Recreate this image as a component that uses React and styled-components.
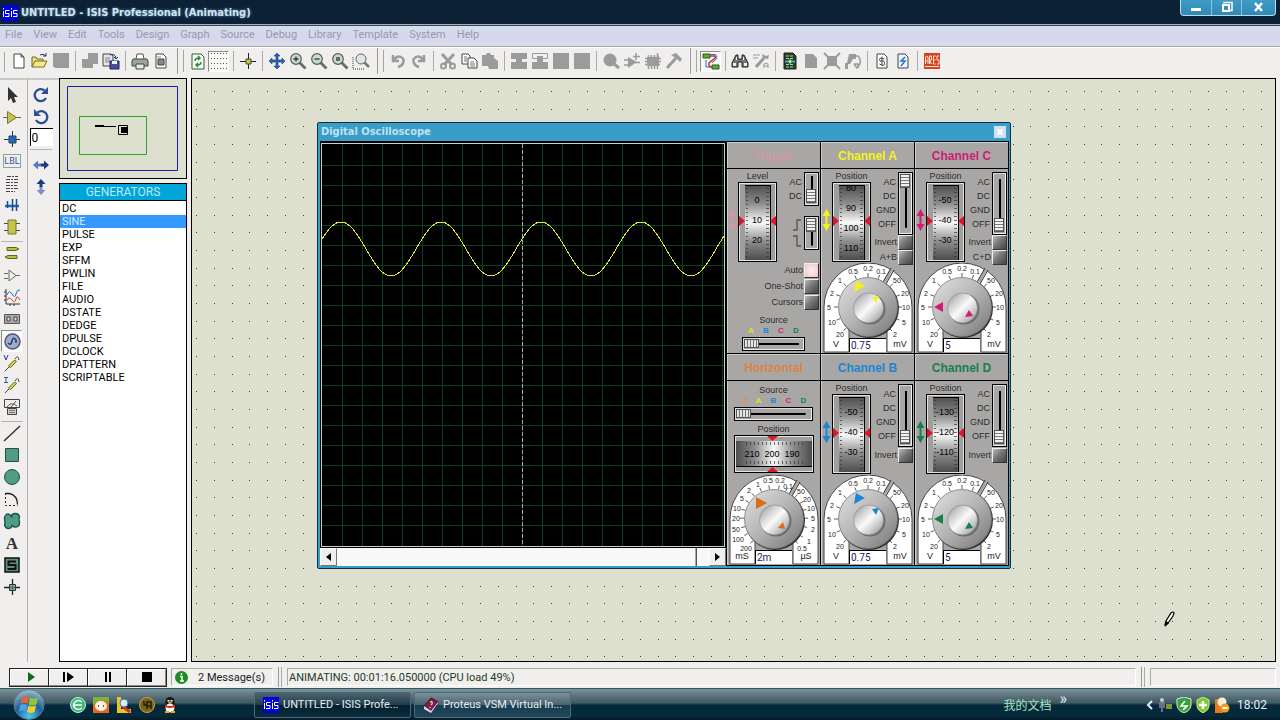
import React from "react";
import styled, { createGlobalStyle } from "styled-components";

const colors = {
    face: "#f0efee",
    canvas: "#dde0cf",
    panel: "#a9a7a6",
    off: "#9b9b9b",
    navy: "#1c3a86",
    teal: "#4f9c87",
    olive: "#c3c44a"
};
const ui = `Roboto, "Liberation Sans", sans-serif`;
const arial = `"Liberation Sans", Arial, sans-serif`;

const GlobalStyle = createGlobalStyle`
    * { box-sizing: border-box; }
    body { margin: 0; background: ${colors.face}; font-family: ${ui}; font-size: 11px; }
    button, input { font: inherit; color: inherit; margin: 0; padding: 0; }
    svg { display: block; flex: none; }
    ul { list-style: none; margin: 0; padding: 0; }
`;

const Page = styled.div`
    min-height: 100vh;
    display: flex;
    flex-direction: column;
`;

/* ---------- title bar and menu ---------- */

const TitleBar = styled.header`
    display: flex;
    align-items: center;
    height: 26px;
    padding-left: 2px;
    background: #0c2036;
    border-bottom: 1px solid #33475a;
    box-shadow: inset 0 -1px #9fb0ba;
`;
const TitleText = styled.h1`
    flex: 1;
    margin: 0 0 0 3px;
    font: bold 11px/24px "DejaVu Sans Condensed", "DejaVu Sans", sans-serif;
    color: #cfe4f2;
    text-shadow: 0 0 3px #6d93b0;
`;
const WindowButtons = styled.div`
    display: flex;
    align-self: flex-start;
    margin-right: 4px;
    border: 1px solid #b9dcea;
    border-top: 0;
    border-radius: 0 0 4px 4px;
    background: linear-gradient(#3f9cc6, #3089b5);
    overflow: hidden;
`;
const WindowButton = styled.button`
    display: flex;
    justify-content: center;
    width: ${p => (p.$wide ? 34 : 30)}px;
    height: 15px;
    border: 0;
    border-left: ${p => (p.$first ? "0" : "1px solid #8cc4dc")};
    background: none;
`;
const MenuBar = styled.nav`
    display: flex;
    gap: 11px;
    height: 21px;
    padding-left: 5px;
    border-bottom: 1px solid #a3a6ad;
    background: linear-gradient(#d3e0ea, #d7d6ea 50%, #dadaec);
`;
const MenuLink = styled.a`
    font-size: 11px;
    line-height: 18px;
    color: #969bab;
    text-decoration: none;
`;

/* ---------- toolbars ---------- */

const ToolBar = styled.div`
    display: flex;
    align-items: center;
    height: 31px;
    padding: 0 0 4px 8px;
    border-top: 1px solid #fff;
    background: linear-gradient(#a5a5a5, #a5a5a5) 4px 4px / 1px 20px no-repeat;
`;
const ToolButton = styled.button`
    display: flex;
    align-items: center;
    justify-content: center;
    width: 21px;
    height: ${p => (p.$tall ? 22 : 21)}px;
    border: 1px solid transparent;
    border-color: ${p => (p.$pressed ? "#8d8d8d #fff #fff #8d8d8d" : "transparent")};
    background: ${p => (p.$pressed ? "#f8f8f7" : "none")};
`;
const Separator = styled.span`
    width: 8px;
    height: 20px;
    background: linear-gradient(#aaa, #aaa) 4px 0 / 1px 100% no-repeat;
`;
const GroupEnd = styled.span`
    width: 16px;
    height: 26px;
    background:
        linear-gradient(#9a9a9a, #9a9a9a) 6px 0 / 1px 100% no-repeat,
        linear-gradient(#a5a5a5, #a5a5a5) 12px 2px / 1px 22px no-repeat;
`;
const Main = styled.main`
    flex: 1;
    display: flex;
    padding-right: 4px;
`;
const ModeColumn = styled.div`
    display: flex;
    flex-direction: column;
    align-items: center;
    width: 28px;
    padding: 6px 4px 0 0;
    border-right: 1px solid #b4b4b4;
    box-shadow: inset 0 2px #c9c9c9;
`;
const ModeRule = styled.span`
    width: 22px;
    height: 4px;
    border-bottom: 1px solid #b5b5b5;
    margin-bottom: ${p => (p.$after || 0)}px;
`;
const TurnColumn = styled(ModeColumn)`
    width: 31px;
    padding-right: 5px;
    border: 0;
`;
const AngleInput = styled.input`
    width: 23px;
    height: 18px;
    padding-left: 1px;
    border: 0;
    border-left: 1px solid #000;
    border-top: 1px solid #000;
    border-radius: 0;
    background: #fff;
    font-size: 12px;
`;

/* ---------- side panels ---------- */

const SideColumn = styled.aside`
    display: flex;
    flex-direction: column;
    gap: 4px;
    width: 128px;
`;
const Overview = styled.div`
    height: 101px;
    border: 1px solid #000;
    background: ${colors.canvas};
`;
const PartList = styled.section`
    flex: 1;
    border: 1px solid #000;
    background: #fff;
`;
const ListTitle = styled.h2`
    margin: 0 0 1px;
    border-bottom: 1px solid #000;
    background: #00a6d8;
    color: #bfe8f4;
    font-size: 12px;
    font-weight: 400;
    line-height: 16px;
    text-align: center;
`;
const ListItem = styled.li`
    padding-left: 2px;
    line-height: 13px;
    color: ${p => (p.$selected ? "#d8ecff" : "#000")};
    background: ${p => (p.$selected ? "#3399ff" : "none")};
`;
const Canvas = styled.section`
    position: relative;
    flex: 1;
    margin-left: 4px;
    border: 1px solid #000;
    background: ${colors.canvas};
    overflow: hidden;
`;
const CanvasDots = styled.svg`
    position: absolute;
    inset: 0;
    width: 100%;
    height: 100%;
`;
const PencilCursor = styled.svg`
    position: absolute;
    left: 972px;
    top: 532px;
`;

/* ---------- oscilloscope window ---------- */

const ScopeWindow = styled.div`
    position: absolute;
    left: 125px;
    top: 43px;
    border: 1px solid #12303f;
    padding: 0 1px 2px 2px;
    border-radius: 2px;
    background: #3a9cc8;
    font-family: ${arial};
`;
const ScopeTitle = styled.div`
    display: flex;
    align-items: center;
    justify-content: space-between;
    height: 18px;
    padding: 0 3px 0 1px;
    font: bold 11px/18px "DejaVu Sans Condensed", "DejaVu Sans", sans-serif;
    color: #bfe2f2;
`;
const ScopeClose = styled.button`
    display: flex;
    width: 12px;
    height: 12px;
    border: 0;
    background: #cfe3ee;
`;
const ScopeBody = styled.div`
    display: grid;
    grid-template-columns: auto repeat(3, 94px);
    grid-template-rows: 212px 212px;
    border-top: 1px solid #000;
    background: #000;
`;
const Scope = styled.div`
    grid-row: span 2;
    border-right: 1px solid #000;
`;
const ScreenFrame = styled.div`
    border: 1px solid #000;
    outline: 1px solid #c6d2cc;
    outline-offset: -2px;
    padding: 1px;
    background: #000;
`;
const ScrollBar = styled.div`
    display: flex;
    height: 18px;
    background: #f8f8f8;
`;
const ScrollButton = styled.button`
    display: flex;
    align-items: center;
    justify-content: center;
    width: 17px;
    border: 1px solid;
    border-color: #fff #777 #777 #fff;
    background: #efefef;
`;
const ScrollThumb = styled.div`
    flex: 1;
    margin-right: 12px;
    border-right: 1px solid #555;
    box-shadow: inset -1px 0 #aaa;
    background: #f8f8f7;
`;
const Panel = styled.section`
    display: flex;
    flex-direction: column;
    border-right: 1px solid #000;
    border-bottom: 1px solid #000;
    background: ${colors.panel};
    box-shadow: inset 1px 1px #cfcfcf;
    font-size: 9px;
    line-height: 11px;
    color: #2c2c2c;
`;
const PanelTitle = styled.h3`
    margin: 0;
    height: 27px;
    border-bottom: 1px solid #000;
    font-size: 12px;
    line-height: 29px;
    text-align: center;
    color: ${p => p.$color};
`;
const Upper = styled.div`
    display: flex;
    height: ${p => (p.$short ? 93 : 94)}px;
    padding: 2px 1px 0 0;
`;
const ArrowSlot = styled.div`
    width: 11px;
    padding: 38px 0 0 1px;
`;
const WheelColumn = styled.div`
    width: 39px;
    text-align: center;
`;
const SwitchColumn = styled.div`
    flex: 1;
    display: flex;
    flex-direction: column;
    align-items: flex-end;
    padding-top: 1px;
`;
const Selector = styled.div`
    display: flex;
    gap: 2px;
    margin-bottom: ${p => (p.$gap || 0)}px;
`;
const SelectorNames = styled.div`
    padding-top: 3px;
    line-height: 14px;
    text-align: right;
`;
const sliderBox = `
    appearance: none;
    border: 1px solid #000;
    padding: 1px 2px 2px 1px;
    box-shadow: inset 1px 1px #ddd, inset -1px -1px #eee;
    &::-webkit-slider-thumb {
        appearance: none;
        border: 1px solid #555;
    }
`;
const VerticalSlider = styled.input`
    ${sliderBox}
    writing-mode: vertical-lr;
    width: 15px;
    height: ${p => p.$height}px;
    background: linear-gradient(#000, #000) 50% 50% / 2px 80% no-repeat, ${colors.panel};
    &::-webkit-slider-thumb {
        width: 10px;
        height: 14px;
        background: repeating-linear-gradient(#f2f2f2 0 2px, #777 2px 3px);
    }
`;
const HorizontalSlider = styled.input`
    ${sliderBox}
    width: ${p => p.$width}px;
    height: 14px;
    margin-top: 1px;
    background: linear-gradient(#000, #000) 50% 50% / 84% 2px no-repeat, ${colors.panel};
    &::-webkit-slider-thumb {
        width: 15px;
        height: 9px;
        background: repeating-linear-gradient(90deg, #e4e4e4 0 2px, #777 2px 3px);
    }
`;
const CheckLabel = styled.label`
    display: flex;
    align-items: center;
    gap: 1px;
    height: 16px;
    white-space: nowrap;
`;
const Check = styled.input`
    appearance: none;
    width: 15px;
    height: 15px;
    border: 1px solid #333;
    border-left-color: #eee;
    border-top-color: #eee;
    background: linear-gradient(135deg, #bbb, #777 45%, #444);
    &:checked { background: radial-gradient(#fff0f0, #f3c4c8); }
`;
const CheckGroup = styled.div`
    display: flex;
    flex-direction: column;
    align-items: flex-end;
    padding-right: 1px;
`;
const SourceBox = styled.div`
    display: flex;
    flex-direction: column;
    align-items: center;
    padding-top: ${p => p.$top}px;
`;
const SourceKeys = styled.div`
    display: flex;
`;
const SourceKey = styled.span`
    display: flex;
    justify-content: center;
    width: 15px;
    height: 10px;
    font-size: 8px;
    font-weight: bold;
    line-height: 10px;
    color: ${p => p.$color};
`;
const TimePosition = styled.div`
    margin-top: 3px;
    text-align: center;
`;
const DialBox = styled.div`
    display: grid;
    justify-items: center;
    margin-top: ${p => (p.$pull || 0)}px;
    > * { grid-area: 1 / 1; }
`;
const DialValue = styled.input`
    align-self: end;
    width: 37px;
    height: 14px;
    margin-bottom: 1px;
    padding-left: 1px;
    border: 1px solid #000;
    border-right: 0;
    border-bottom: 0;
    border-radius: 0;
    background: #fff;
    font-family: ${ui};
    font-size: 10px;
    color: #1a1a5e;
`;

/* ---------- status bar and task bar ---------- */

const StatusBar = styled.footer`
    display: flex;
    align-items: center;
    height: 26px;
    padding: 4px 4px 0 9px;
`;
const PlayGroup = styled.div`
    display: flex;
    margin-right: 4px;
    border: 1px solid #000;
`;
const PlayButton = styled.button`
    display: flex;
    align-items: center;
    justify-content: center;
    width: 39px;
    height: 17px;
    border: 1px solid;
    border-color: #fff #8a8a8a #8a8a8a #fff;
    outline: 1px solid #222;
    background: ${colors.face};
`;
const StatusPane = styled.div`
    display: flex;
    align-items: center;
    gap: 10px;
    flex: ${p => p.$flex || "none"};
    width: ${p => (p.$width ? p.$width + "px" : "auto")};
    height: 18px;
    padding-left: ${p => p.$pad || 1}px;
    border: 1px solid;
    border-color: #a8a8a8 #fff #fff #a8a8a8;
    color: ${p => p.$color || "#222"};
    white-space: nowrap;
`;
const StatusGrip = styled.span`
    width: 4px;
    height: 20px;
    margin: 0 5px;
    border-left: 1px solid #999;
    border-right: 1px solid #aaa;
`;
const TaskBar = styled.footer`
    display: flex;
    align-items: center;
    height: 32px;
    padding-left: 13px;
    border-top: 1px solid #2b5964;
    background: linear-gradient(#7d9299, #586f79 25%, #3d5a66 45%, #06293c 52%, #042a3c 85%, #061a28);
    color: #e6eef2;
`;
const IconButton = styled.button`
    display: flex;
    padding: 0;
    border: 0;
    background: none;
`;
const QuickLaunch = styled.div`
    display: flex;
    gap: 7px;
    width: 184px;
    margin-left: 25px;
`;
const Tasks = styled.div`
    display: flex;
    flex: 1;
    gap: 3px;
`;
const TaskButton = styled.button`
    display: flex;
    align-items: center;
    gap: 4px;
    width: 157px;
    height: 26px;
    padding-left: 8px;
    border: 1px solid #4d6b78;
    border-radius: 2px;
    background: ${p =>
        p.$active
            ? "linear-gradient(#4f636e, #1d3d4c 50%, #03202f 52%, #0a2c3c)"
            : "linear-gradient(#7d919a, #48626e 50%, #173c4e 52%, #20485a)"};
    font-size: 11px;
    white-space: nowrap;
`;
const TrayLink = styled.a`
    font-family: "Noto Sans CJK SC", sans-serif;
    font-size: 12px;
    color: #a9e6c0;
    text-decoration: none;
`;
const TrayMore = styled.span`
    margin: 0 79px 12px 8px;
    font-size: 16px;
    line-height: 16px;
`;
const Tray = styled.div`
    display: flex;
    align-items: center;
    gap: 3px;
    padding-right: 13px;
`;
const Clock = styled.time`
    margin-left: 4px;
    font-size: 12px;
`;

/* ---------- icons ---------- */

const sheet = "M4 2h7l3 3v11h-10z";
const lens = inner => (
    <>
        <path d="M10.500 10.500l6 6" stroke="#6c6c6c" strokeWidth="2.800" />
        <circle cx="7" cy="7" r="5.300" fill="#c6dccb" stroke="#5c5c5c" strokeWidth="1.200" />
        {inner}
    </>
);

const icons = {
    new: <path d={sheet + "M11 2v3h3"} fill="#fff" stroke="#444" />,
    open: (
        <>
            <path d="M1 15V5h4l1 2h6v2" fill="#e9dc7a" stroke="#7a6a1c" />
            <path d="M1 15l3-6h12l-3 6z" fill="#f3e98f" stroke="#7a6a1c" />
            <path d="M9 3q3-2 6 1m0-3v3h-3" fill="none" stroke="#223d6b" />
        </>
    ),
    save: <path d="M1 1h16v15h-14l-2-2z" fill={colors.off} />,
    importOff: <path d="M7 1h10v11h-5v4h-10l-1-1v-8h6z" fill={colors.off} />,
    exportSheet: (
        <>
            <path d="M1 2h8l2 2v10h-10z" fill="#e4e4ec" stroke="#444" />
            <path d="M3 6h5M3 8h5M3 10h5" stroke="#888" />
            <path d="M8 3q5-2 6 3m-2-1l2 2 2-2" fill="none" stroke="#20306f" />
            <path d="M8 9h9v8h-9z" fill="#4b4ba0" stroke="#23235c" />
            <path d="M10 9h5v3h-5z" fill="#dfe" />
        </>
    ),
    print: (
        <>
            <path d="M5 7l1-5h6l1 5" fill="#fff" stroke="#555" />
            <path d="M2 7h14l1 2v5h-16v-5z" fill="#9aa89c" stroke="#444" />
            <path d="M5 12h8v5h-8z" fill="#dff0df" stroke="#444" />
        </>
    ),
    printArea: (
        <>
            <path d={sheet} fill="#fff" stroke="#444" />
            <path d="M6 7h6v6h-6z" fill="#888" stroke="#444" />
            <path d="M5 5h4" stroke="#888" />
        </>
    ),
    redraw: (
        <>
            <path d="M3 2h9l3 3v12h-12z" fill="#f4fff4" stroke="#355a35" />
            <path d="M6 9q0-3 4-3m-1-2l2 2-2 2M12 10q0 3-4 3m1 2l-2-2 2-2" fill="none" stroke="#2b8a35" strokeWidth="1.500" />
        </>
    ),
    grid: (
        <path d="M1 1.500h16M1 6.500h16M1 11.500h16M1 16.500h16" stroke="#555" strokeDasharray="1 2" shapeRendering="crispEdges" />
    ),
    origin: (
        <>
            <path d="M9.500 1v16M1 9.500h16" stroke="#222" />
            <path d="M7 7h5v5h-5z" fill="#c8c82c" stroke="#444" />
        </>
    ),
    pan: (
        <path
            d="M9 1l3 3h-2v4h4v-2l3 3-3 3v-2h-4v4h2l-3 3-3-3h2v-4h-4v2l-3-3 3-3v2h4v-4h-2z"
            fill="#2c63b4"
            stroke="#1b3a78"
            strokeWidth=".6"
        />
    ),
    zoomIn: lens(<path d="M7 4.500v5M4.500 7h5" stroke="#333" strokeWidth="1.300" />),
    zoomOut: lens(<path d="M4.500 7h5" stroke="#333" strokeWidth="1.300" />),
    zoomAll: lens(<path d="M5 5h4v4h-4z" fill="#667" />),
    zoomArea: (
        <>
            <path d="M1 5v12h11" fill="none" stroke="#333" strokeDasharray="1 1" />
            <path d="M12 10l5 5" stroke="#777" strokeWidth="2.500" />
            <circle cx="9" cy="7" r="5" fill="#dde6ea" stroke="#666" />
        </>
    ),
    undo: <path d="M4 3v6h6M5 8q3-5 7-3t2 6q-1 3-5 4" fill="none" stroke={colors.off} strokeWidth="2.500" />,
    redo: <path d="M14 3v6h-6M13 8q-3-5-7-3t-2 6q1 3 5 4" fill="none" stroke={colors.off} strokeWidth="2.500" />,
    cut: (
        <>
            <path d="M3 2l10 11M15 2l-10 11" stroke={colors.off} strokeWidth="3" />
            <circle cx="4.500" cy="14" r="2.500" fill="none" stroke={colors.off} strokeWidth="2" />
            <circle cx="13.500" cy="14" r="2.500" fill="none" stroke={colors.off} strokeWidth="2" />
        </>
    ),
    copy: (
        <>
            <path d="M2 2h6l2 2v8h-8z" fill="#fff" stroke="#444" />
            <path d="M8 6h6l3 3v7h-9z" fill="#fff" stroke="#444" />
            <path d="M10 10h4M10 12h5M10 14h5M4 5h3M4 7h3M4 9h3" stroke="#777" />
        </>
    ),
    paste: <path d="M1 3h4l1-2h3l1 2h3v3l4 3v8h-9l-1-3h-6z" fill={colors.off} />,
    blockCopy: <path d="M1 1h16v6h-5v3h5v7h-16v-7h5v-3h-5z" fill={colors.off} />,
    blockMove: (
        <>
            <path d="M1.500 1.500h15v5h-15z" fill="none" stroke={colors.off} />
            <path d="M6 4h6v6h5v7h-16v-7h5z" fill={colors.off} />
        </>
    ),
    block: <path d="M1 1h16v16h-16z" fill={colors.off} />,
    pick: (
        <>
            <circle cx="8" cy="8" r="6.500" fill={colors.off} />
            <path d="M11 11l6 5" stroke={colors.off} strokeWidth="3" />
        </>
    ),
    make: (
        <>
            <path d="M5 5l9 5-9 6z" fill={colors.off} />
            <path d="M1 8h5M1 13h5M12 10.500h5M13 1v7M10 4.500h7" stroke={colors.off} strokeWidth="1.500" />
        </>
    ),
    packageTool: (
        <>
            <path d="M3 5h10l2-2v11h-12z" fill={colors.off} />
            <path d="M4.500 3v14M7.500 3v14M10.500 3v14M13.500 1v16M1 6.500h16M1 9.500h16M1 12.500h15" stroke={colors.off} strokeWidth="1.500" />
        </>
    ),
    decompose: (
        <>
            <path d="M2 16l9-10" stroke={colors.off} strokeWidth="3" />
            <path d="M6 3l5-2 6 6-2 3-4-4z" fill={colors.off} />
        </>
    ),
    wire: (
        <>
            <path d="M1 2h7v4h-7zM10 13h7v4h-7z" fill="#5cae2c" stroke="#2c5c18" />
            <path d="M8 4h4q2 0 1 2l-6 5q-1 4 3 4" fill="none" stroke="#c03428" strokeWidth="1.500" />
            <path d="M8 2.500h5q3 1 1 5l-4 3M4 8v7h5" fill="none" stroke="#2c6cc0" />
        </>
    ),
    find: (
        <>
            <path d="M5 3h2v4h4v-4h2l4 8v4h-6v-5h-4v5h-6v-4z" fill="#777" stroke="#222" />
            <path d="M2 11h3v3h-3zM13 11h3v3h-3zM5 5h1v3h-1zM12 5h1v3h-1z" fill="#eee" />
        </>
    ),
    assign: (
        <>
            <path d="M1 3h7M1 6h5" stroke={colors.off} />
            <path d="M4 15l8-9" stroke="#999" strokeWidth="3" />
            <path d="M10 2l1 4 5 1 1-4-3 1z" fill="#999" />
            <path d="M12 16v-4q2-2 4 0v4M12 14h4" fill="none" stroke="#999" />
        </>
    ),
    explorer: (
        <>
            <path d="M3 1h9l3 3v13h-12z" fill="#2c3a2c" stroke="#222" />
            <path d="M5 4h7M5 6.500h8M5 12.500h8M5 15h8" stroke="#8ce89c" strokeDasharray="3 1" />
            <path d="M4 9.500h10" stroke="#3cb4c4" strokeWidth="2" />
            <circle cx="9" cy="9.500" r="2" fill="#f0e040" stroke="#2c8a9c" />
        </>
    ),
    sheetOff: <path d="M3 2h8l4 4v10h-12z" fill={colors.off} />,
    removeOff: (
        <>
            <path d="M4 4h10v10h-10z" fill={colors.off} />
            <path d="M1 1l16 16M17 1l-16 16" stroke={colors.off} strokeWidth="2" />
        </>
    ),
    parentOff: (
        <>
            <path d="M5 2h7v5h-3l-3 5h-2v5h-3v-6h2z" fill={colors.off} />
            <path d="M10 4h4q3 3 2 8l-3 4-3-4M10 12h4v4" fill="none" stroke={colors.off} strokeWidth="1.500" />
        </>
    ),
    bill: (
        <>
            <path d={sheet} fill="#fff" stroke="#444" />
            <path d="M11.500 7q-5-2-5 .5t2.500 1.500 2.500 2.500-5 .5M9 4.500v9" fill="none" stroke="#444" />
        </>
    ),
    erc: (
        <>
            <path d={sheet} fill="#eef6ff" stroke="#444" />
            <path d="M11 5l-4 4h4l-4 5" fill="none" stroke="#2470d0" strokeWidth="1.500" />
        </>
    ),
    ares: (
        <>
            <path d="M1 1h16v16h-16z" fill="#d2441f" />
            <path d="M2.500 12v-7q1.500-2 2.500 0v7M2.500 9h2M6.500 12v-8h2v4h-2l2 4M12.500 4h-2v8h2M10.500 8h2M16 4h-2v4h2v4h-2M2 14.500h14" fill="none" stroke="#ffe6dc" />
        </>
    ),

    select: <path d="M5 1v14l3-3 2 5 3-1-2-5h4z" fill="#333" />,
    component: (
        <>
            <path d="M0 9.500h18" stroke="#666" />
            <path d="M4.500 3.500l9 6-9 6z" fill={colors.olive} stroke="#77772c" />
        </>
    ),
    junction: (
        <>
            <path d="M9.500 1v16M1 9.500h16" stroke="#333" />
            <path d="M6 6h7v7h-7z" fill="#2c68b0" stroke="#1c4478" />
        </>
    ),
    label: (
        <>
            <path d="M.5 2.500h17v13h-17z" fill="none" stroke="#355" strokeDasharray="1 1" />
            <text x="9" y="12" fontSize="9" fontFamily="Roboto" textAnchor="middle" fill="#1f5c9c">LBL</text>
        </>
    ),
    script: (
        <path
            d="M4 2.500h11M3 5.500h12M3 8.500h12M3 11.500h11M3 14.500h12M3 17.500h9"
            stroke="#444"
            strokeDasharray="4 1 2 1"
            shapeRendering="crispEdges"
        />
    ),
    bus: (
        <>
            <path d="M2 10h14" stroke="#2468b4" strokeWidth="2.500" />
            <path d="M4.500 5v7M9.500 3v12M13.500 3v12" stroke="#1c4c88" strokeWidth="1.500" />
        </>
    ),
    subcircuit: (
        <>
            <path d="M1 5.500h16M1 12.500h16" stroke="#444" />
            <path d="M5 2h8v14h-8z" fill={colors.olive} stroke="#77772c" />
        </>
    ),
    terminal: (
        <path d="M4 3.500h9l3 1.500-3 1.500h-9zM14 11.500h-9l-3 1.500 3 1.500h9z" fill="#b9bf3e" stroke="#5f6424" />
    ),
    pin: <path d="M6 4l7 5.500-7 5.500zM1 7.500h4M1 12.500h4M13 9.500h4" fill="none" stroke="#666" />,
    graph: (
        <>
            <path d="M3 1v15h14M1 4h2M1 8h2M1 12h2M7 16v2M11 16v2" fill="none" stroke="#333" />
            <path d="M4 7q2-6 5-1t4 0 4-4" fill="none" stroke="#2c68b4" />
            <path d="M4 12q2-4 5 0t4-1 4 1" fill="none" stroke="#c0442c" />
        </>
    ),
    tape: (
        <>
            <path d="M1.500 4.500h15v9h-15z" fill="#aaa" stroke="#555" />
            <path d="M4 7h3v4h-3zM11 7h3v4h-3z" fill="#ddd" stroke="#444" />
        </>
    ),
    generator: (
        <>
            <circle cx="9.500" cy="9.500" r="7.500" fill="#a5adc2" stroke="#4c587c" strokeWidth="1.500" />
            <path d="M5 11q3 3 4-2t4-1v3" fill="none" stroke="#1c3c98" strokeWidth="1.500" />
        </>
    ),
    probeV: (
        <>
            <path d="M2 17l4-4M12 5q3-5 4 1" fill="none" stroke="#444" />
            <path d="M5.500 12l6-6 2 1.500-6 6z" fill="#d6dc3c" stroke="#60641c" />
            <path d="M1 1l2 5 2-5" fill="none" stroke="#2c3c9c" />
        </>
    ),
    probeI: (
        <>
            <path d="M2 17l4-4M12 5q3-5 4 1" fill="none" stroke="#444" />
            <path d="M5.500 12l6-6 2 1.500-6 6z" fill="#d6dc3c" stroke="#60641c" />
            <path d="M1 1.500h4M1 6.500h4M3 1v5" fill="none" stroke="#2c5c9c" />
        </>
    ),
    meter: (
        <>
            <path d="M1.500 1.500h15v8h-15z" fill="#eee" stroke="#444" />
            <path d="M4 9q4-6 10-1M8 9l5-6" fill="none" stroke="#555" />
            <path d="M4.500 10.500h9v6h-9z" fill="#d8d0c8" stroke="#444" />
            <path d="M6 12.500h6M6 14.500h6" stroke="#777" />
        </>
    ),
    line: <path d="M1 17l16-15" stroke="#333" strokeWidth="1.500" />,
    box: <path d="M2.500 2.500h13v13h-13z" fill={colors.teal} stroke="#2c4c44" />,
    circle: <circle cx="9" cy="9" r="7.500" fill={colors.teal} stroke="#2c4c44" />,
    arc: (
        <>
            <path d="M2.500 3v12.500h12" fill="none" stroke="#222" strokeDasharray="2 2" />
            <path d="M2.500 3.500h4q8 2 8 11" fill="none" stroke="#222" strokeWidth="1.300" />
        </>
    ),
    path: (
        <path
            d="M9 5.500q-2-4-5-3.500-3 2-2.500 5.500l.5 3-.5 2.500q1 3.500 4 3.500 3 0 3.500-3 1.500 2 4.500 1.500 3.500-1 3-5l-.5-2.500.5-3q-1-3-4-3-2 0-3.500 1z"
            fill={colors.teal}
            stroke="#1f5044"
            strokeWidth="1.300"
        />
    ),
    text: <text x="9" y="15" fontSize="17" fontWeight="bold" fontFamily="Liberation Serif" textAnchor="middle" fill="#333">A</text>,
    symbol: (
        <>
            <path d="M2 2h14v14h-14z" fill="#5b8f80" stroke="#111" strokeWidth="1.500" />
            <path d="M13 5.500h-7.500v3.500h7v4h-8" fill="none" stroke="#111" strokeWidth="2" />
        </>
    ),
    marker: (
        <>
            <path d="M9.500 1v16M1 9.500h16" stroke="#222" strokeWidth="1.300" />
            <path d="M6.500 6.500h6v6h-6z" fill="#5a9c8a" fillOpacity=".7" stroke="#333" />
        </>
    ),
    turnRight: (
        <>
            <path d="M12.500 4.500a6 6 0 1 0 1.500 7.500" fill="none" stroke="#2c4c94" strokeWidth="2.300" />
            <path d="M16 1v7h-7z" fill="#2c4c94" />
        </>
    ),
    turnLeft: (
        <>
            <path d="M5.500 4.500a6 6 0 1 1-1.500 7.500" fill="none" stroke="#2c4c94" strokeWidth="2.300" />
            <path d="M2 1v7h7z" fill="#2c4c94" />
        </>
    ),
    flipX: (
        <>
            <path d="M1 9l5-4.500v3h3v3h-3v3z" fill="#5c78c4" />
            <path d="M17 9l-5-4.500v3h-3v3h3v3z" fill="#1c3a7c" />
        </>
    ),
    flipY: (
        <>
            <path d="M9 1l-4.500 5h3v3h3v-3h3z" fill="#1c3a7c" />
            <path d="M9 17l-4.500-5h3v-3h3v3h3z" fill="#8290c0" />
        </>
    )
};

const Icon = ({ name }) => (
    <svg width="18" height="18" viewBox="0 0 18 18" aria-hidden="true">
        {icons[name]}
    </svg>
);

const IsisLogo = () => (
    <svg width="16" height="16" viewBox="0 0 16 16" aria-hidden="true">
        <path d="M0 0h16v16h-16z" fill="#0000d8" />
        <path d="M1.500 6v6M1.500 3v1.500M7.500 5.500h-4v3h3.500v3h-4M9.500 6v6M9.500 3v1.500M15.500 5.500h-4v3h3.500v3h-4" fill="none" stroke="#fff" />
    </svg>
);

/* ---------- toolbar data, "|" is a rule and "||" ends a group ---------- */

const topTools = [
    "new", "open", "save", "|", "importOff", "exportSheet", "|", "print", "printArea", "||",
    "redraw", "grid", "|", "origin", "|", "pan", "zoomIn", "zoomOut", "zoomAll", "zoomArea", "||",
    "undo", "redo", "|", "cut", "copy", "paste", "|", "blockCopy", "blockMove", "block", "block", "|",
    "pick", "make", "packageTool", "decompose", "||",
    "wire", "|", "find", "assign", "|", "explorer", "sheetOff", "removeOff", "parentOff", "|",
    "bill", "erc", "|", "ares"
];
const modeTools = [
    "select", "component", "junction", "label", "script", "bus", "subcircuit", "|",
    "terminal", "pin", "graph", "tape", "generator", "probeV", "probeI", "meter", "|",
    "line", "box", "circle", "arc", "path", "text", "symbol", "marker"
];
const pressed = ["grid", "wire", "generator"];
const menus = ["File", "View", "Edit", "Tools", "Design", "Graph", "Source", "Debug", "Library", "Template", "System", "Help"];
const generators = [
    "DC", "SINE", "PULSE", "EXP", "SFFM", "PWLIN", "FILE", "AUDIO",
    "DSTATE", "DEDGE", "DPULSE", "DCLOCK", "DPATTERN", "SCRIPTABLE"
];

/* ---------- instrument parts ---------- */

const range = (n, from, step) => Array.from({ length: n }, (_, i) => from + i * step);

const wave = range(403, 0, 1)
    .map(x => `${x},${(105 - 27 * Math.cos(((x - 19) * Math.PI) / 50)).toFixed(1)}`)
    .join(" ");

const Screen = () => (
    <svg width="402" height="402" viewBox="0 0 402 402">
        <g stroke="#06401f" shapeRendering="crispEdges">
            {range(20, 20, 20).map(x => <path key={x} d={`M${x}.5 0v402`} />)}
            {range(19, 21, 20).map(y => <path key={y} d={`M0 ${y}.5h402`} />)}
        </g>
        <path d="M200.500 0v402" stroke="#a7a79a" strokeDasharray="4 2" />
        <polyline points={wave} fill="none" stroke="#e6e632" shapeRendering="crispEdges" />
    </svg>
);

const WheelFill = ({ id, flat }) => (
    <linearGradient id={id} x1="0" y1="0" x2={flat ? 1 : 0} y2={flat ? 0 : 1}>
        <stop offset="0" stopColor="#4c4c4c" />
        <stop offset=".25" stopColor="#8e8e8e" />
        <stop offset=".5" stopColor="#fafafa" />
        <stop offset=".75" stopColor="#8e8e8e" />
        <stop offset="1" stopColor="#4c4c4c" />
    </linearGradient>
);

const Wheel = ({ id, marks }) => (
    <svg width="39" height="80" viewBox="0 0 39 80">
        <defs><WheelFill id={id} /></defs>
        <path d="M0 0h39v80h-39z" fill="#000" />
        <path d="M1 1h37v78h-37z" fill="#e4e4e4" />
        <path d="M2 2h35v76h-35z" fill="#a09e9d" />
        <path d="M7 3h25v75h-25z" fill={`url(#${id})`} />
        <path d="M32.500 3v75M7 3.500h26" stroke="#000" />
        <g stroke="#333" strokeWidth=".7">
            {range(18, 6, 4).map(y => <path key={y} d={`M8 ${y}.500h2M28 ${y}.500h3`} />)}
        </g>
        <path d="M1 34v10l6-5zM38 34v10l-6-5z" fill="#e0142c" />
        <g fontSize="9" textAnchor="middle" fill="#000">
            {marks.map(([text, y]) => <text key={text} x="19" y={y + 3}>{text}</text>)}
        </g>
    </svg>
);

const FlatWheel = () => (
    <svg width="80" height="38" viewBox="0 0 80 38">
        <defs><WheelFill id="time" flat /></defs>
        <path d="M0 0h80v38h-80z" fill="#000" />
        <path d="M1 1h78v36h-78z" fill="#e4e4e4" />
        <path d="M2 2h76v34h-76z" fill="#a09e9d" />
        <path d="M2 6h76v25h-76z" fill="url(#time)" />
        <path d="M2 31.500h76" stroke="#000" />
        <g stroke="#333" strokeWidth=".7">
            {range(15, 12, 4).map(x => <path key={x} d={`M${x}.500 7v3M${x}.500 26v3`} />)}
        </g>
        <path d="M33 1h11l-5.500 5zM33 37h11l-5.500-5z" fill="#e0142c" />
        <g fontSize="9" textAnchor="middle" fill="#000">
            <text x="18" y="22">210</text>
            <text x="38" y="22">200</text>
            <text x="58" y="22">190</text>
        </g>
    </svg>
);

const LevelArrow = ({ color }) => (
    <svg width="9" height="22" viewBox="0 0 9 22">
        <path d="M4.500 0l4 7h-3v8h3l-4 7-4-7h3v-8h-3z" fill={color} />
    </svg>
);

const voltScale = [
    ["20", 17, 71], ["10", 9, 59], ["5", 6, 44], ["2", 9, 30], ["1", 17, 17], ["0.5", 30, 8], ["0.2", 45, 5],
    ["0.1", 58, 8], ["50", 74, 17], ["20", 82, 30], ["10", 83, 44], ["5", 81, 59], ["2", 72, 71]
];
const timeScale = [
    ["200", 17, 73], ["100", 9, 64], ["50", 7, 54], ["20", 7, 43], ["10", 8, 33], ["5", 13, 23], ["2", 20, 15],
    ["1", 29, 9], ["0.5", 39, 5], ["0.2", 51, 5], ["0.1", 59, 11], ["50", 72, 16], ["20", 78, 24], ["10", 82, 33],
    ["5", 84, 43], ["2", 84, 54], ["1", 80, 66], ["0.5", 73, 73]
];

const pointers = {
    volts: ["M33 18l9 5-11 6z", "M49 34l7-1-3 7z"],
    fives: ["M17 44l9-5v10z", "M48 54l4-7 4 6z"],
    time: ["M27 22l11 6-11 6z", "M49 53l5-6 2 7z"]
};

const Dial = ({ id, scale, left, right, value, pointer, color, pull }) => (
    <DialBox $pull={pull}>
        <svg width="90" height="90" viewBox="0 0 90 90">
            <defs>
                <linearGradient id={id} x1="0" y1="0" x2="1" y2="1">
                    <stop offset="0" stopColor="#e2e2e2" />
                    <stop offset=".5" stopColor="#b3b3b3" />
                    <stop offset="1" stopColor="#757575" />
                </linearGradient>
                <linearGradient id={id + "cap"} x1="0" y1="0" x2="1" y2="1">
                    <stop offset="0" stopColor="#8d8d8d" />
                    <stop offset=".3" stopColor="#d4d4d4" />
                    <stop offset=".5" stopColor="#fafafa" />
                    <stop offset=".7" stopColor="#d0d0d0" />
                    <stop offset="1" stopColor="#8a8a8a" />
                </linearGradient>
            </defs>
            <path d="M1 89V44A44 44 0 0 1 89 44V89H64V66H26V89Z" fill="#fff" stroke="#444" />
            <path d="M70 4l-8 15" stroke="#a9a7a6" strokeWidth="3" />
            <path d="M68 5l-8 14M71 7l-8 14" stroke="#333" />
            <g stroke="#333" strokeWidth=".8">
                {scale.map(([text, x, y], i) => {
                    const a = Math.atan2(y - 44, x - 45);
                    return (
                        <line
                            key={i}
                            x1={45 + 30 * Math.cos(a)}
                            y1={44 + 30 * Math.sin(a)}
                            x2={45 + 34 * Math.cos(a)}
                            y2={44 + 34 * Math.sin(a)}
                        />
                    );
                })}
            </g>
            <g fontSize="7" textAnchor="middle" fill="#222">
                {scale.map(([text, x, y], i) => <text key={i} x={x} y={y + 2.5}>{text}</text>)}
                <text x="13" y="84" fontSize="9">{left}</text>
                <text x="77" y="84" fontSize="9">{right}</text>
            </g>
            <circle cx="46" cy="45" r="30" fill="#333" />
            <circle cx="45" cy="44" r="29.500" fill={`url(#${id})`} stroke="#777" strokeWidth=".8" />
            <circle cx="47" cy="46" r="15.500" fill="#6d6d6d" />
            <circle cx="45.500" cy="45" r="15" fill={`url(#${id}cap)`} stroke="#888" strokeWidth=".6" />
            <path d={pointers[pointer][0]} fill={color} />
            <path d={pointers[pointer][1]} fill={color} />
        </svg>
        <DialValue aria-label={left + " per division"} defaultValue={value} />
    </DialBox>
);

const Toggle = ({ label, checked }) => (
    <CheckLabel>
        {label}
        <Check type="checkbox" defaultChecked={checked} />
    </CheckLabel>
);

const Channel = ({ name, color, marks, coupling, sum, value, pointer }) => (
    <Panel>
        <PanelTitle $color={color}>Channel {name}</PanelTitle>
        <Upper>
            <ArrowSlot><LevelArrow color={color} /></ArrowSlot>
            <WheelColumn>
                Position
                <Wheel id={"wheel" + name} marks={marks} />
            </WheelColumn>
            <SwitchColumn>
                <Selector>
                    <SelectorNames>AC<br />DC<br />GND<br />OFF</SelectorNames>
                    <VerticalSlider type="range" min="0" max="3" defaultValue={coupling} $height={63} aria-label="Coupling" />
                </Selector>
                <Toggle label="Invert" />
                {sum && <Toggle label={sum} />}
            </SwitchColumn>
        </Upper>
        <Dial id={"dial" + name} scale={voltScale} left="V" right="mV" value={value} pointer={pointer} color={color} />
    </Panel>
);

const sourceColors = { A: "#e0e01c", B: "#1c86d0", C: "#d01c74", D: "#14804c" };

const Source = ({ top, ramp, width }) => (
    <SourceBox $top={top}>
        Source
        <SourceKeys>
            {ramp && (
                <SourceKey>
                    <svg width="11" height="9" viewBox="0 0 11 9">
                        <path d="M1 8l7-6v6" fill="none" stroke="#d09468" strokeWidth="1.500" />
                    </svg>
                </SourceKey>
            )}
            {Object.keys(sourceColors).map(k => <SourceKey key={k} $color={sourceColors[k]}>{k}</SourceKey>)}
        </SourceKeys>
        <HorizontalSlider type="range" min="0" max="4" defaultValue="0" $width={width} aria-label="Source" />
    </SourceBox>
);

const Trigger = () => (
    <Panel>
        <PanelTitle $color="#cf98a2">Trigger</PanelTitle>
        <Upper $short>
            <ArrowSlot><LevelArrow color="#cf98a2" /></ArrowSlot>
            <WheelColumn>
                Level
                <Wheel id="wheelLevel" marks={[["0", 18], ["10", 38], ["20", 58]]} />
            </WheelColumn>
            <SwitchColumn>
                <Selector $gap={10}>
                    <SelectorNames>AC<br />DC</SelectorNames>
                    <VerticalSlider type="range" min="0" max="1" defaultValue="1" $height={34} aria-label="Trigger coupling" />
                </Selector>
                <Selector>
                    <svg width="10" height="34" viewBox="0 0 10 34">
                        <path d="M1 14h4v-10h4M1 20h4v10h4" fill="none" stroke="#555" strokeWidth="1.300" />
                    </svg>
                    <VerticalSlider type="range" min="0" max="1" defaultValue="0" $height={34} aria-label="Trigger edge" />
                </Selector>
            </SwitchColumn>
        </Upper>
        <CheckGroup>
            <Toggle label="Auto" checked />
            <Toggle label="One-Shot" />
            <Toggle label="Cursors" />
        </CheckGroup>
        <Source top={5} width={63} />
    </Panel>
);

const Horizontal = () => (
    <Panel>
        <PanelTitle $color="#dc8444">Horizontal</PanelTitle>
        <Source top={4} width={79} ramp />
        <TimePosition>
            Position
            <DialBox><FlatWheel /></DialBox>
        </TimePosition>
        <Dial id="dialTime" scale={timeScale} left="mS" right="µS" value="2m" pointer="time" color="#dc6c1c" pull={2} />
    </Panel>
);

const Oscilloscope = () => (
    <ScopeWindow>
        <ScopeTitle>
            Digital Oscilloscope
            <ScopeClose aria-label="Close">
                <svg width="12" height="12" viewBox="0 0 12 12">
                    <path d="M3.500 3.500l5 5M8.500 3.500l-5 5" stroke="#fff" strokeWidth="2" />
                </svg>
            </ScopeClose>
        </ScopeTitle>
        <ScopeBody>
            <Scope>
                <ScreenFrame><Screen /></ScreenFrame>
                <ScrollBar>
                    <ScrollButton aria-label="Scroll left">
                        <svg width="5" height="8"><path d="M5 0v8l-5-4z" /></svg>
                    </ScrollButton>
                    <ScrollThumb />
                    <ScrollButton aria-label="Scroll right">
                        <svg width="5" height="8"><path d="M0 0v8l5-4z" /></svg>
                    </ScrollButton>
                </ScrollBar>
            </Scope>
            <Trigger />
            <Channel name="A" color="#f2f21c" marks={[["80", 6], ["90", 26], ["100", 46], ["110", 66]]} coupling="0" sum="A+B" value="0.75" pointer="volts" />
            <Channel name="C" color="#d01c74" marks={[["-50", 18], ["-40", 38], ["-30", 58]]} coupling="3" sum="C+D" value="5" pointer="fives" />
            <Horizontal />
            <Channel name="B" color="#1c86d0" marks={[["-50", 18], ["-40", 38], ["-30", 58]]} coupling="3" value="0.75" pointer="volts" />
            <Channel name="D" color="#14804c" marks={[["-130", 18], ["-120", 38], ["-110", 58]]} coupling="3" value="5" pointer="fives" />
        </ScopeBody>
    </ScopeWindow>
);

/* ---------- task bar drawings ---------- */

const StartOrb = () => (
    <svg width="32" height="31" viewBox="0 0 32 31">
        <defs>
            <radialGradient id="orb" cx=".5" cy=".9" r=".9">
                <stop offset="0" stopColor="#4cc8f0" />
                <stop offset=".5" stopColor="#1c6098" />
                <stop offset="1" stopColor="#a8c0cc" />
            </radialGradient>
        </defs>
        <circle cx="16" cy="15.500" r="15" fill="url(#orb)" stroke="#5c7c8c" />
        <path d="M9 9q3-3 7-1l-1.500 7q-3-2-7 0z" fill="#e8642c" />
        <path d="M17 8.500q3 2 8 0l-1.500 7q-4 2-8 0z" fill="#8cc83c" />
        <path d="M7 16q4-2 7.500 0l-1.500 6.500q-3-2-7 0z" fill="#4ca0e8" />
        <path d="M15.500 16.500q3 2 7.500 0l-1.500 6.500q-4 2-7.500 0z" fill="#f8cc30" />
    </svg>
);

const quickIcons = [
    <>
        <circle cx="8" cy="8" r="7.500" fill="#3cb878" stroke="#c8f0d8" />
        <path d="M4 8h8M12 5q-4-3-7 0t0 6 7 0" fill="none" stroke="#fff" strokeWidth="1.500" />
    </>,
    <>
        <path d="M0 0h16v16h-16z" fill="#e06820" />
        <path d="M0 0h16v5q-8-4-16 3z" fill="#78b43c" />
        <ellipse cx="8" cy="9" rx="6" ry="5" fill="#fff0e4" />
        <path d="M5.500 8v2M10.500 8v2" stroke="#a04020" />
    </>,
    <>
        <path d="M1 0h4v12h10v4h-14z" fill="#f0c420" />
        <path d="M6 9l8 6" stroke="#d83020" strokeWidth="3" />
        <circle cx="8" cy="6" r="4" fill="#d8ecf8" stroke="#3878b8" />
    </>,
    <>
        <circle cx="8" cy="8" r="7.500" fill="#7c6418" stroke="#c4a838" />
        <path d="M5 4v4h3M8 4v8M12 5v7M8 5h4v4h-4" fill="none" stroke="#241c04" strokeWidth="1.500" />
    </>,
    <>
        <ellipse cx="8" cy="10" rx="6" ry="6" fill="#181818" />
        <circle cx="8" cy="4.500" r="4.500" fill="#181818" />
        <ellipse cx="8" cy="11" rx="4.500" ry="4.500" fill="#fff" />
        <path d="M3 7.500q5 3 10 0v2.500q-5 2-10 0z" fill="#d82c1c" />
        <path d="M5.500 5h5l-2.500 2zM3 14h4v2h-4zM9 14h4v2h-4z" fill="#f0a81c" />
        <path d="M5.500 3h2v1.500h-2zM8.500 3h2v1.500h-2z" fill="#fff" />
    </>
];

const trayIcons = [
    <>
        <path d="M5 3v12M3 5v6M7 5v6" stroke="#8c8498" strokeWidth="1.500" />
        <circle cx="5" cy="3" r="2" fill="#d0c8dc" />
        <path d="M9 7h6v5h-6z" fill="#78982c" />
    </>,
    <>
        <path d="M8 0l7 2v6q0 5-7 8-7-3-7-8v-6z" fill="#38a03c" stroke="#d8ecd0" />
        <path d="M9 4l-4 5h6l-4 4" fill="none" stroke="#fff" strokeWidth="1.500" />
    </>,
    <>
        <path d="M8 0l6 3v6q0 4-6 7-6-3-6-7v-6z" fill="#7cc830" stroke="#c8f088" />
        <path d="M8 4v8M4 8h8" stroke="#fff" strokeWidth="2.500" />
    </>,
    <>
        <path d="M1 16v-14h8v14z" fill="#e87c1c" />
        <circle cx="8" cy="5" r="4.500" fill="#f4f0dc" />
        <circle cx="11" cy="11" r="4.500" fill="#f09820" />
        <path d="M8.500 11h5" stroke="#fff" strokeWidth="2" />
    </>
];

const playShapes = [
    <path d="M10 1l7 5-7 5z" fill="#0c6c14" />,
    <path d="M6 1h2v10h-2zM10 1l7 5-7 5z" />,
    <path d="M9 1h2v10h-2zM13 1h2v10h-2z" />,
    <path d="M7 1h10v10h-10z" />
];
const playNames = ["Play", "Step", "Pause", "Stop"];

export default function App() {
    return (
        <Page>
            <GlobalStyle />
            <TitleBar>
                <IsisLogo />
                <TitleText>UNTITLED - ISIS Professional (Animating)</TitleText>
                <WindowButtons>
                    <WindowButton $first aria-label="Minimize">
                        <svg width="14" height="14"><path d="M2 8h10v3h-10z" fill="#fff" /></svg>
                    </WindowButton>
                    <WindowButton aria-label="Restore">
                        <svg width="14" height="14">
                            <path d="M4 3.500v-1h8v8h-2" fill="none" stroke="#fff" strokeWidth="1.500" />
                            <path d="M3 5h6v6h-6z" fill="none" stroke="#fff" strokeWidth="2" />
                        </svg>
                    </WindowButton>
                    <WindowButton $wide aria-label="Close">
                        <svg width="14" height="14"><path d="M3 3l7 8M10 3l-7 8" stroke="#fff" strokeWidth="2.500" /></svg>
                    </WindowButton>
                </WindowButtons>
            </TitleBar>
            <MenuBar>
                {menus.map(m => <MenuLink key={m} href="#">{m}</MenuLink>)}
            </MenuBar>
            <ToolBar>
                {topTools.map((t, i) => {
                    if (t === "|") return <Separator key={i} />;
                    if (t === "||") return <GroupEnd key={i} />;
                    return (
                        <ToolButton key={i} aria-label={t} $pressed={pressed.includes(t)}>
                            <Icon name={t} />
                        </ToolButton>
                    );
                })}
            </ToolBar>
            <Main>
                <ModeColumn>
                    {modeTools.map((t, i) =>
                        t === "|" ? (
                            <ModeRule key={i} />
                        ) : (
                            <ToolButton key={i} $tall aria-label={t} $pressed={pressed.includes(t)}>
                                <Icon name={t} />
                            </ToolButton>
                        )
                    )}
                </ModeColumn>
                <TurnColumn>
                    <ToolButton $tall aria-label="Rotate clockwise"><Icon name="turnRight" /></ToolButton>
                    <ToolButton $tall aria-label="Rotate anticlockwise"><Icon name="turnLeft" /></ToolButton>
                    <AngleInput aria-label="Angle" defaultValue="0" />
                    <ModeRule $after={4} />
                    <ToolButton $tall aria-label="Mirror X"><Icon name="flipX" /></ToolButton>
                    <ToolButton $tall aria-label="Mirror Y"><Icon name="flipY" /></ToolButton>
                </TurnColumn>
                <SideColumn>
                    <Overview>
                        <svg width="126" height="99" viewBox="0 0 126 99">
                            <path d="M7.500 7.500h110v84h-110z" fill="none" stroke="#1c1ca8" />
                            <path d="M19.500 37.500h67v38h-67z" fill="none" stroke="#2ca42c" />
                            <path d="M35 47.500h21" stroke="#000" />
                            <path d="M35 46h9v2h-9z" />
                            <path d="M58.500 46.500h9v9h-9z" fill="none" stroke="#000" />
                            <path d="M61 48h6v6h-6z" />
                        </svg>
                    </Overview>
                    <PartList>
                        <ListTitle>GENERATORS</ListTitle>
                        <ul>
                            {generators.map(g => <ListItem key={g} $selected={g === "SINE"}>{g}</ListItem>)}
                        </ul>
                    </PartList>
                </SideColumn>
                <Canvas>
                    <CanvasDots aria-hidden="true">
                        <defs>
                            {/* four dots across and three down keep every dot on a whole pixel */}
                            <pattern id="dots" x="4" y="12" width="71" height="53" patternUnits="userSpaceOnUse">
                                {[0, 18, 36, 53].map(x =>
                                    [0, 18, 35].map(y => <rect key={x + "-" + y} x={x} y={y} width="1" height="1" fill="#3c3c34" />)
                                )}
                            </pattern>
                        </defs>
                        <rect width="100%" height="100%" fill="url(#dots)" />
                    </CanvasDots>
                    <Oscilloscope />
                    <PencilCursor width="12" height="18" viewBox="0 0 12 18">
                        <path d="M1 14l1-4 5-8q2-2 3 0l-1 3-5 7z" fill="#fff" stroke="#000" strokeWidth="1.200" />
                        <path d="M1 16l1-6 3 2z" />
                    </PencilCursor>
                </Canvas>
            </Main>
            <StatusBar>
                <PlayGroup>
                    {playShapes.map((shape, i) => (
                        <PlayButton key={i} aria-label={playNames[i]}>
                            <svg width="24" height="12">{shape}</svg>
                        </PlayButton>
                    ))}
                </PlayGroup>
                <StatusPane $width={102} $pad={3}>
                    <svg width="13" height="13" viewBox="0 0 13 13">
                        <circle cx="6.500" cy="6.500" r="6.500" fill="#1c8c24" />
                        <path d="M6.500 2v2M5 5.500h2v4M5 10h4" fill="none" stroke="#fff" strokeWidth="1.500" />
                    </svg>
                    2 Message(s)
                </StatusPane>
                <StatusGrip />
                <StatusPane $flex="1" $color="#1f3c1f">ANIMATING: 00:01:16.050000 (CPU load 49%)</StatusPane>
                <StatusGrip />
                <StatusPane $width={126} />
            </StatusBar>
            <TaskBar>
                <IconButton aria-label="Start"><StartOrb /></IconButton>
                <QuickLaunch>
                    {quickIcons.map((icon, i) => (
                        <IconButton key={i} aria-label={"Launch " + (i + 1)}>
                            <svg width="16" height="16" viewBox="0 0 16 16">{icon}</svg>
                        </IconButton>
                    ))}
                </QuickLaunch>
                <Tasks>
                    <TaskButton $active><IsisLogo />UNTITLED - ISIS Profe...</TaskButton>
                    <TaskButton>
                        <svg width="16" height="16" viewBox="0 0 16 16">
                            <path d="M1 9l7-8 7 4-7 10z" fill="#7c1c5c" stroke="#3c0c2c" />
                            <path d="M1 9v3l7 4 7-10v-1l-7 9z" fill="#e8d8e4" />
                            <path d="M7 5q3-1 2 2l-1 1M7 10v1" fill="none" stroke="#f8e040" strokeWidth="1.300" />
                        </svg>
                        Proteus VSM Virtual In...
                    </TaskButton>
                </Tasks>
                <TrayLink href="#">我的文档</TrayLink>
                <TrayMore>»</TrayMore>
                <Tray>
                    <svg width="8" height="10"><path d="M6 1l-4 4 4 4" fill="none" stroke="#dfeef8" strokeWidth="2" /></svg>
                    {trayIcons.map((icon, i) => (
                        <svg key={i} width="16" height="16" viewBox="0 0 16 16">{icon}</svg>
                    ))}
                    <Clock>18:02</Clock>
                </Tray>
            </TaskBar>
        </Page>
    );
}
